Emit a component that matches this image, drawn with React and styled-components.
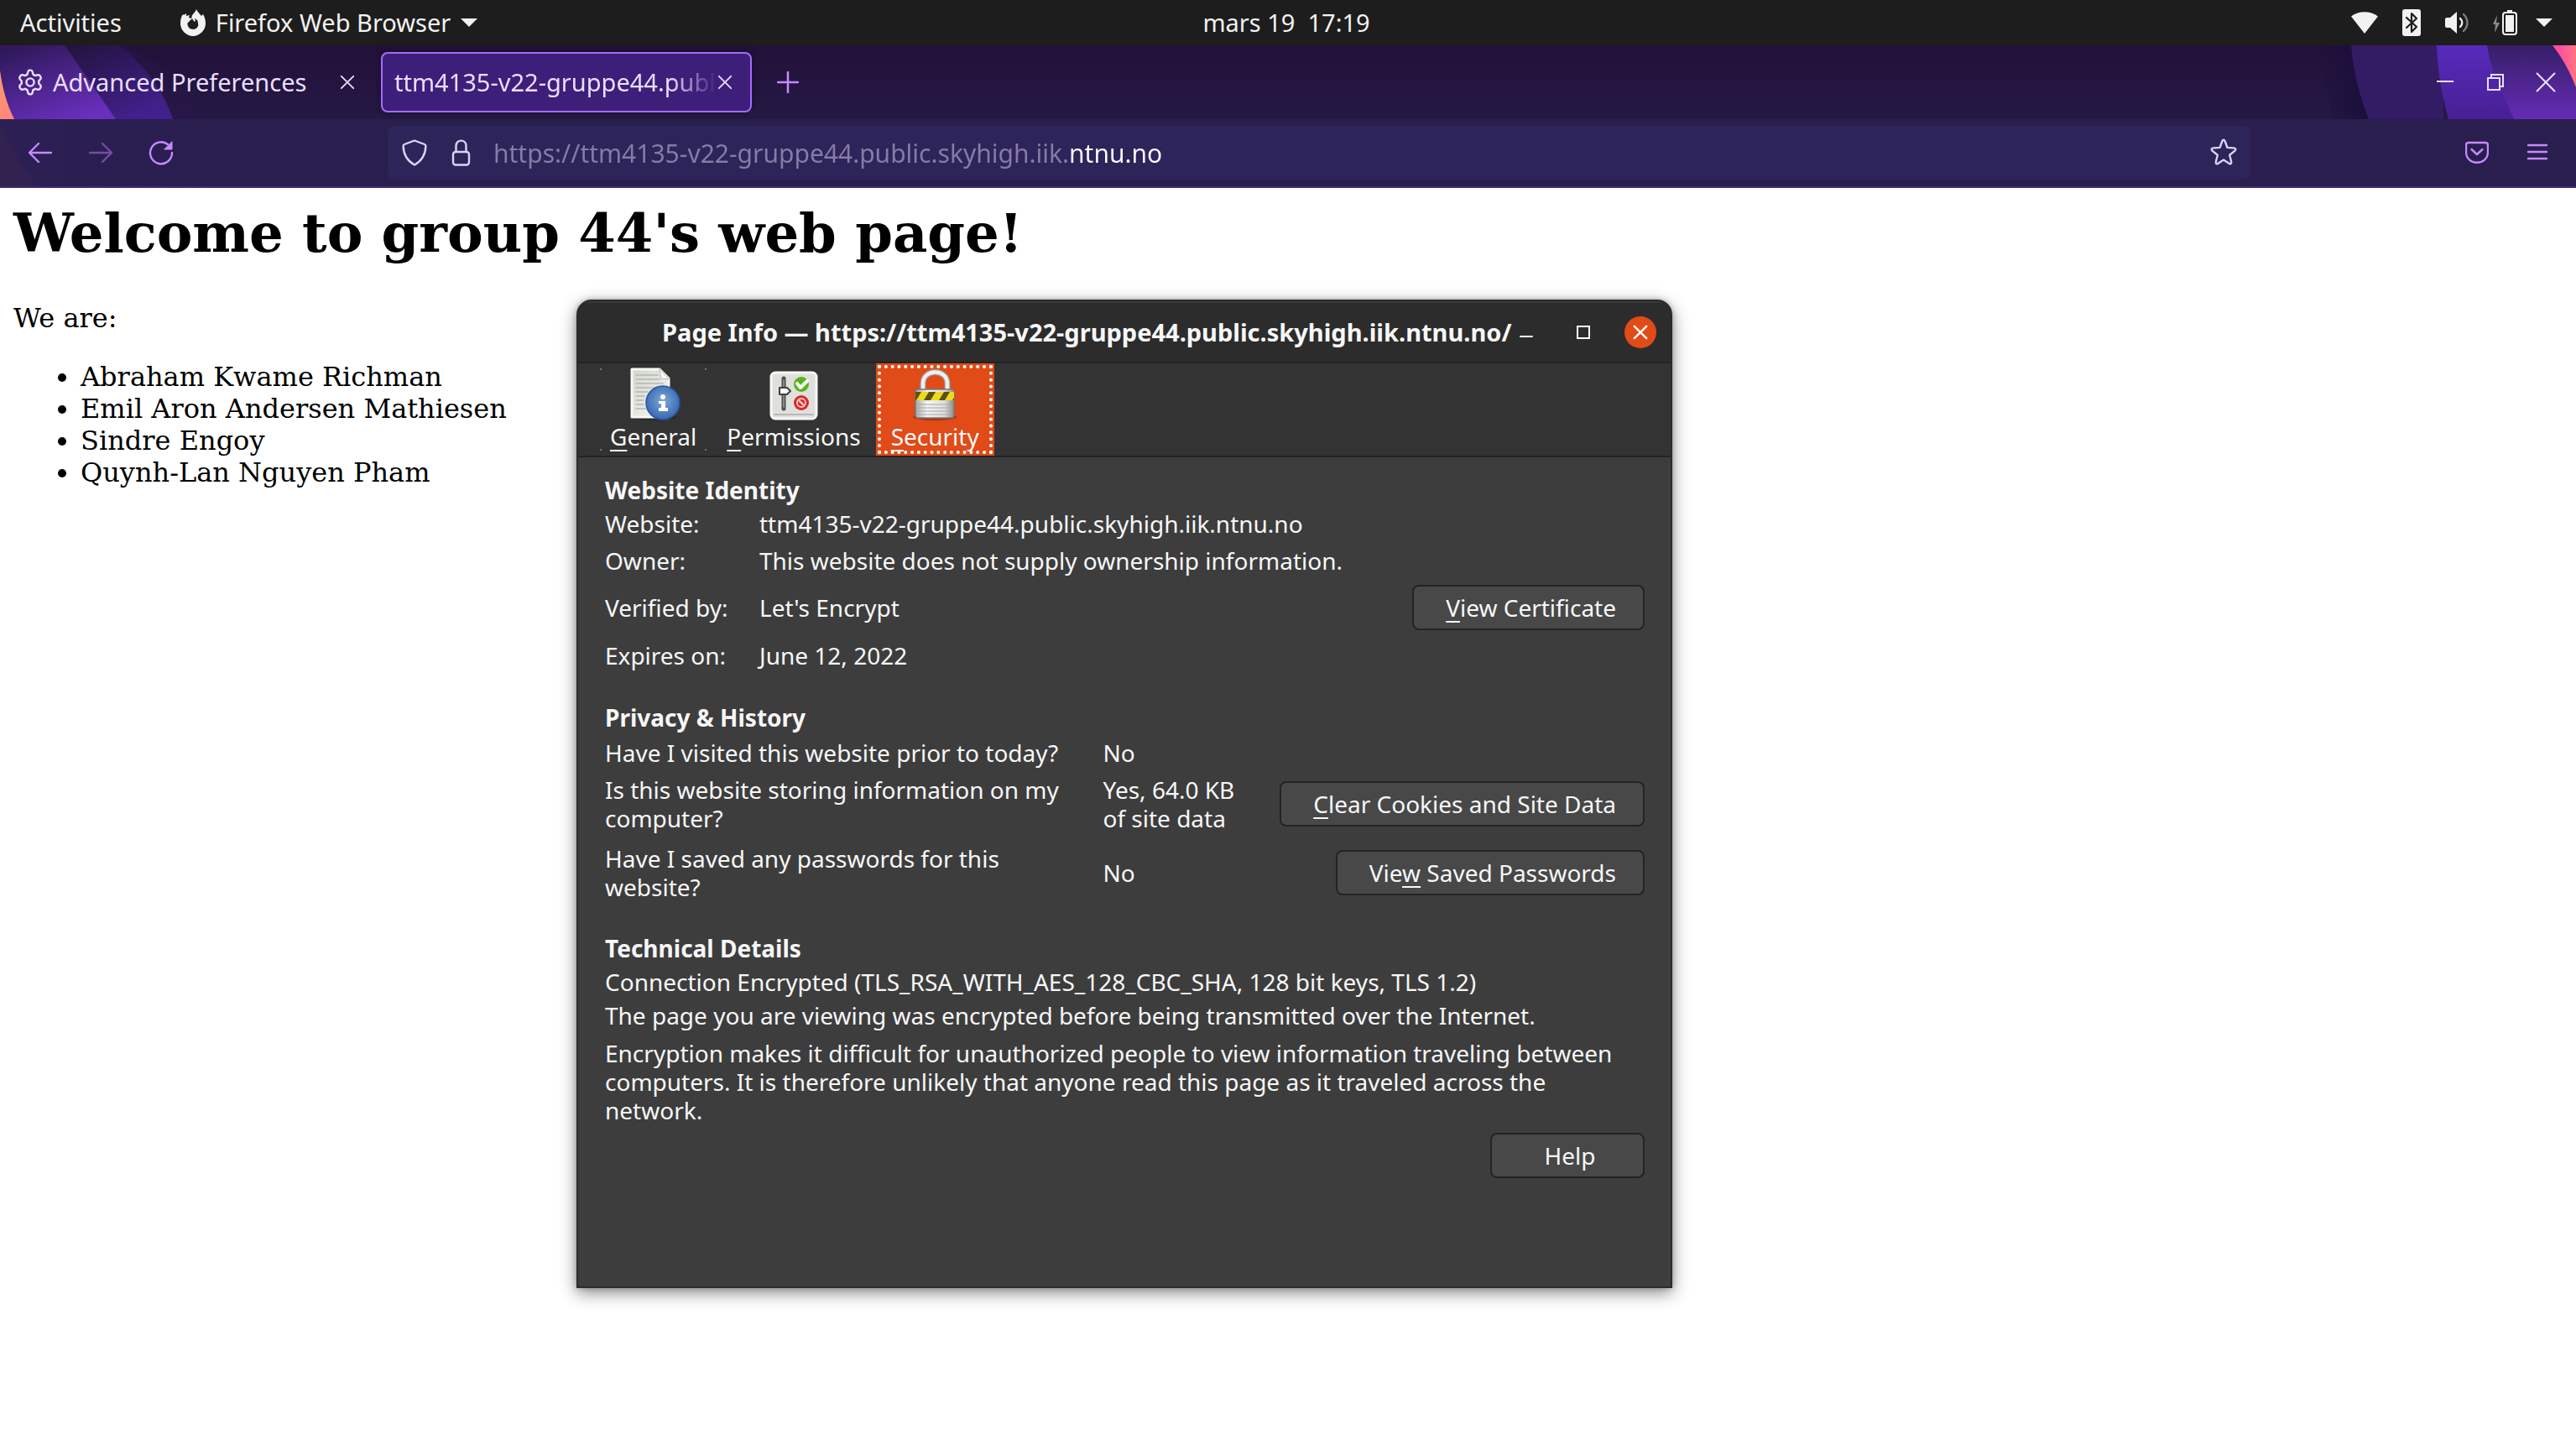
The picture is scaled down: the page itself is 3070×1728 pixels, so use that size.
import React from "react";
import styled, { createGlobalStyle } from "styled-components";

const ui = `"Noto Sans", "Open Sans", sans-serif`;
const serif = `"DejaVu Serif", serif`;

const GlobalStyle = createGlobalStyle`
  html, body, #root { height: 100%; }
  body { margin: 0; background: #fff; overflow: hidden; }
  button { font: inherit; color: inherit; background: none; border: 0; padding: 0; margin: 0; }
  *, *::before, *::after { box-sizing: border-box; }
`;

const Desktop = styled.div`
  position: relative;
  display: flex;
  flex-direction: column;
  min-height: 100%;
  font-family: ${ui};
  font-size: 28px;
`;

/* ---- GNOME panel ---- */

const Panel = styled.header`
  display: grid;
  grid-template-columns: 1fr auto 1fr;
  align-items: center;
  height: 54px;
  padding: 0 28px 0 24px;
  background: #1d1d1d;
  color: #f2f2f2;
  font-size: 29px;
`;

const PanelGroup = styled.div`
  display: flex;
  align-items: center;
  justify-content: ${(p) => (p.$end ? "flex-end" : "flex-start")};
  gap: ${(p) => p.$gap}px;
`;

const PanelButton = styled.button`
  display: flex;
  align-items: center;
  gap: ${(p) => p.$gap || 0}px;
  line-height: 54px;
  white-space: pre;
`;

const Icon = styled.svg`
  display: block;
  flex: none;
  width: ${(p) => p.$w}px;
  height: ${(p) => p.$h || p.$w}px;
  fill: none;
  stroke: currentColor;
  stroke-width: ${(p) => p.$stroke || 2};
  stroke-linecap: round;
  stroke-linejoin: ${(p) => (p.$sharp ? "miter" : "round")};
`;

const Solid = styled(Icon)`
  fill: currentColor;
  stroke: none;
`;

/* ---- Browser chrome ---- */

const TabStrip = styled.div`
  position: relative;
  display: flex;
  align-items: center;
  height: 88px;
  background: linear-gradient(#221139, #251945);
  color: #e9dffc;
  font-size: 29px;
`;

const Artwork = styled.svg`
  position: absolute;
  top: 0;
  ${(p) => (p.$right ? "right: 0;" : "left: 0;")}
  width: 320px;
  height: 88px;
`;

const Tab = styled.div`
  position: relative;
  display: flex;
  align-items: center;
  width: 442px;
  height: 72px;
  margin-left: ${(p) => (p.$active ? 4 : 8)}px;
  padding: 0 ${(p) => (p.$active ? 20 : 26)}px 0 ${(p) => (p.$active ? 14 : 12)}px;
  border: ${(p) => (p.$active ? "2px solid #a46cff" : "0")};
  border-radius: 8px;
  background: ${(p) => (p.$active ? "#3d1f7a" : "none")};
  box-shadow: ${(p) => (p.$active ? "0 0 8px rgba(0, 0, 0, 0.4)" : "none")};
`;

const TabTitle = styled.button`
  display: flex;
  flex: 1;
  align-items: center;
  gap: 11px;
  min-width: 0;
  overflow: hidden;
  line-height: 68px;
  text-align: left;
  white-space: nowrap;
  ${(p) => p.$fade && "mask-image: linear-gradient(to right, #000 calc(100% - 56px), transparent);"}
`;

const IconButton = styled.button`
  position: relative;
  display: flex;
  flex: none;
  align-items: center;
  justify-content: center;
  width: ${(p) => p.$size || 64}px;
  height: ${(p) => p.$size || 64}px;
  color: ${(p) => p.$color || "inherit"};
  opacity: ${(p) => (p.disabled ? 0.45 : 1)};
`;

const WindowControls = styled.div`
  display: flex;
  gap: 20px;
  margin-left: auto;
  padding-right: 16px;
`;

const NavBar = styled.nav`
  display: grid;
  grid-template-columns: 454px minmax(0, 1fr) 384px;
  align-items: center;
  height: 82px;
  padding: 0 4px;
  border-bottom: 2px solid #3a2f6e;
  background:
    linear-gradient(58deg, #33224f 0, #33224f 34px, transparent 38px),
    linear-gradient(90deg, #2b1f54, #291e4e 260px);
  color: #c58aff;
`;

const NavGroup = styled.div`
  display: flex;
  align-items: center;
  justify-content: ${(p) => (p.$end ? "flex-end" : "flex-start")};
  gap: ${(p) => p.$gap}px;
  padding: 0 10px 0 12px;
`;

const UrlBar = styled.label`
  display: flex;
  align-items: center;
  height: 64px;
  margin-left: 4px;
  padding: 0 14px 0 16px;
  gap: 26px;
  border-radius: 8px;
  background: #2d245a;
  color: #dcd3f2;
`;

const UrlInput = styled.input`
  flex: 1;
  min-width: 0;
  height: 60px;
  padding: 0;
  border: 0;
  outline: 0;
  font: 30px ${ui};
  color: transparent;
  background: linear-gradient(90deg, #877ca5 686px, #fbfbfe 686px);
  background-clip: text;
  -webkit-background-clip: text;
`;

/* ---- Web page ---- */

const Page = styled.main`
  flex: 1;
  padding: 16px;
  background: #fff;
  color: #000;
  font: 32px/38px ${serif};
`;

const PageTitle = styled.h1`
  margin: 0 0 44px;
  font-size: 64px;
  line-height: 76px;
`;

const Paragraph = styled.p`
  margin: 0 0 32px;
`;

const Members = styled.ul`
  margin: 0;
  padding-left: 80px;
`;

/* ---- Page Info window ---- */

const Dialog = styled.section`
  position: absolute;
  top: 357px;
  left: 687px;
  width: 1306px;
  min-height: 1178px;
  border: 2px solid #2b2b2b;
  border-radius: 18px 18px 0 0;
  overflow: hidden;
  background: #3d3d3d;
  color: #f7f7f7;
  box-shadow: 0 6px 20px rgba(0, 0, 0, 0.45), 0 0 6px rgba(0, 0, 0, 0.25);
`;

const TitleBar = styled.div`
  display: flex;
  align-items: center;
  height: 74px;
  padding: 0 17px 0 100px;
  border-top: 2px solid #393939;
  border-bottom: 2px solid #232323;
  background: #2c2c2c;
`;

const DialogTitle = styled.h2`
  flex: 1;
  margin: 0;
  min-width: 0;
  font-size: 29px;
  line-height: 70px;
  white-space: nowrap;
`;

const DialogControls = styled.div`
  display: flex;
  gap: 30px;
`;

const DialogControl = styled(IconButton)`
  width: 38px;
  height: 38px;
  border-radius: 50%;
  background: ${(p) => (p.$close ? "#e04b18" : "none")};
  color: #fff;
`;

const Categories = styled.div`
  display: flex;
  height: 112px;
  padding-left: 20px;
  border-bottom: 2px solid #232323;
  background: #333;
`;

const corner = "linear-gradient(#a8634c, #a8634c)";

const Category = styled.button`
  position: relative;
  display: flex;
  flex-direction: column;
  align-items: center;
  padding: 4px 18px;
  line-height: 38px;
  background: ${(p) => (p.$active ? "#e04b18" : "none")};

  &::before {
    content: ${(p) => (p.$marked ? '""' : "none")};
    position: absolute;
    inset: 6px;
    background: ${corner} 0 0, ${corner} 100% 0, ${corner} 0 100%, ${corner} 100% 100%;
    background-size: 2px 2px;
    background-repeat: no-repeat;
  }

  &::after {
    content: ${(p) => (p.$active ? '""' : "none")};
    position: absolute;
    inset: 2px;
    border: 4px dotted #fff;
  }
`;

const AccessKey = styled.u`
  text-decoration-thickness: 2px;
  text-underline-offset: 5px;
  text-decoration-skip-ink: none;
`;

const DialogBody = styled.div`
  padding: 19px 31px 0 32px;
`;

const Group = styled.section`
  margin-bottom: ${(p) => (p.$last ? 10 : 29)}px;
`;

const GroupTitle = styled.h3`
  margin: 0;
  font-size: 28px;
  line-height: 40px;
`;

const Facts = styled.table`
  width: 100%;
  table-layout: fixed;
  border-collapse: collapse;
  line-height: 34px;

  th, td { padding: 0; font-weight: 400; text-align: left; vertical-align: middle; }
  th { width: ${(p) => p.$label}px; padding-right: 28px; }
  td:last-child:not(:nth-child(2)) { text-align: right; }
`;

const Fact = styled.tr`
  height: ${(p) => p.$h}px;
`;

const Answer = styled.td`
  width: 188px;
`;

const Action = styled.td`
  width: ${(p) => p.$w || 320}px;
`;

const Push = styled.button`
  height: 54px;
  padding: 0 32px 0 38px;
  border: 2px solid #232323;
  border-radius: 8px;
  background: #484848;
  line-height: 50px;
  white-space: nowrap;
  min-width: 184px;
`;

const Detail = styled.p`
  margin: 0 0 ${(p) => p.$gap || 0}px;
  line-height: ${(p) => (p.$wrap ? 34 : 40)}px;
`;

const Footer = styled.div`
  display: flex;
  justify-content: flex-end;
`;

/* ---- Drawings ---- */

const Cross = ({ size, stroke }) => (
  <Icon $w={size} viewBox="0 0 20 20" $stroke={stroke || 2}>
    <path d="M2 2l16 16M18 2L2 18" />
  </Icon>
);

const Caret = () => (
  <Solid $w={20} $h={10} viewBox="0 0 20 10">
    <path d="M0 0h20L10 10z" />
  </Solid>
);

const FirefoxMark = () => (
  <Solid $w={30} $h={32} viewBox="0 0 30 32">
    <path
      fillRule="evenodd"
      d="M19 0c1 3 4 5 6 8l2-2c2 3 3 7 3 11 0 8-7 15-15 15S0 25 0 17C0 12 1 9 3 6l1 1 3-2v3l4-1-1 3 3 1c1-2 0-3 2-5 1-2 3-3 4-6zM14 11l-4 4c-2 1-2 3-1 5 1 3 4 4 7 4 4-1 6-4 5-7 0-3-1-5-4-6 1 2 1 3 0 4-1-1-2-2-3-4z"
    />
  </Solid>
);

const Gear = () => (
  <Icon $w={32} viewBox="0 0 32 32" $stroke={2.4}>
    <circle cx="16" cy="16" r="4.6" />
    <path d="M13.2 4q.4-2.400 2.800-2.400T18.800 4l.6 2.600 2.600 1.500 2.700-.8q2-.6 3.300 1.600 1.400 2.300 0 3.800L26.200 14.500v3l1.800 1.800q1.400 1.500 0 3.800-1.300 2.200-3.300 1.600l-2.700-.8-2.600 1.500-.6 2.600q-.4 2.400-2.800 2.400T13.200 28l-.6-2.600L10 23.900l-2.700.8q-2 .6-3.300-1.600-1.400-2.300 0-3.800L5.800 17.500v-3L4 12.700q-1.400-1.500 0-3.800 1.300-2.200 3.300-1.600l2.700.8 2.600-1.500z" />
  </Icon>
);

const LeftArt = () => (
  <Artwork viewBox="0 0 320 88" aria-hidden="true">
    <defs>
      <linearGradient id="l1" x1="0.2" y1="0" x2="0.7" y2="1">
        <stop offset="0" stopColor="#2f195c" />
        <stop offset="1" stopColor="#6a2fbe" />
      </linearGradient>
      <linearGradient id="l2" x1="0" y1="0" x2="0.6" y2="1">
        <stop offset="0" stopColor="#22133d" />
        <stop offset="1" stopColor="#42208c" />
      </linearGradient>
      <linearGradient id="l3" x1="0" y1="0" x2="0" y2="1">
        <stop offset="0" stopColor="#ff9a6e" />
        <stop offset="1" stopColor="#ff8878" />
      </linearGradient>
    </defs>
    <path d="M141 0C195 15 225 50 245 88H0V0z" fill="#281548" opacity="0.5" />
    <path d="M77 0h64c35 26 54 56 65 88h-70z" fill="url(#l2)" />
    <path d="M0 0h77l61 88H0z" fill="url(#l1)" />
    <path d="M0 30c3 22 8 40 17 58H0z" fill="url(#l3)" />
  </Artwork>
);

const RightArt = () => (
  <Artwork $right viewBox="0 0 320 88" aria-hidden="true">
    <defs>
      <linearGradient id="r0">
        <stop offset="0" stopColor="#1a0e3a" stopOpacity="0" />
        <stop offset="1" stopColor="#1a0e3a" />
      </linearGradient>
      <linearGradient id="r2" x1="0" y1="0" x2="0" y2="1">
        <stop offset="0" stopColor="#582abc" />
        <stop offset="1" stopColor="#462094" />
      </linearGradient>
      <linearGradient id="r3" x1="0" y1="0" x2="0" y2="1">
        <stop offset="0" stopColor="#371e68" />
        <stop offset="1" stopColor="#652cb5" />
      </linearGradient>
      <linearGradient id="r4">
        <stop offset="0.3" stopColor="#ff4fa0" />
        <stop offset="1" stopColor="#ff7480" />
      </linearGradient>
    </defs>
    <path d="M10 0h43l20 88H30z" fill="url(#r0)" />
    <path d="M52 0h110v88H73C62 60 54 30 52 0z" fill="#331c63" />
    <path d="M154 0h70l30 88h-86c-8-28-13-58-14-88z" fill="url(#r2)" />
    <path d="M214 0h106v88h-74C234 60 218 30 214 0z" fill="url(#r3)" />
    <path d="M292 0h28v50C313 32 304 15 292 0z" fill="url(#r4)" />
  </Artwork>
);

const GeneralIcon = () => (
  <Solid $w={64} viewBox="0 0 64 64">
    <defs>
      <linearGradient id="paper" x1="0" y1="0" x2="1" y2="1">
        <stop offset="0" stopColor="#d3d6cf" />
        <stop offset="1" stopColor="#f6f6f4" />
      </linearGradient>
      <radialGradient id="info" cx="0.5" cy="0.45" r="0.6">
        <stop offset="0" stopColor="#7fa9dc" />
        <stop offset="1" stopColor="#2f63ac" />
      </radialGradient>
    </defs>
    <ellipse cx="32" cy="60" rx="28" ry="4" fill="#222" opacity="0.5" />
    <path d="M6 3h33l11 11v46H6z" fill="url(#paper)" stroke="#f7f7f5" strokeWidth="3" />
    <path d="M39 3l2 11 9 1z" fill="#fff" stroke="#b5b8b0" strokeWidth="1" />
    <path d="M11 10h26M11 15h28M11 20h32M11 25h32M11 30h14M11 35h10M11 40h9M11 45h9M11 50h11" stroke="#b4b8ae" strokeWidth="1.5" />
    <circle cx="43" cy="43" r="20" fill="url(#info)" stroke="#28569c" strokeWidth="1.5" />
    <circle cx="43" cy="36" r="3" fill="#fff" />
    <path d="M38 41h8v8h3v4H38v-4h3v-5h-3z" fill="#fff" />
  </Solid>
);

const PermissionsIcon = () => (
  <Solid $w={64} viewBox="0 0 64 64">
    <rect x="5" y="7" width="54" height="55" rx="5" fill="#dfe0dc" stroke="#f6f6f6" strokeWidth="3" />
    <path d="M9 57h46" stroke="#b7b9b4" strokeWidth="2" />
    <path d="M20 14v36" stroke="#4b504d" strokeWidth="5" />
    <path d="M20 16v32" stroke="#9a9d9a" strokeWidth="1.5" />
    <path d="M15 25h9l4 4-4 4h-9z" fill="#fff" stroke="#3d4240" strokeWidth="2" />
    <circle cx="41" cy="21" r="9" fill="#57b51c" />
    <path d="M36 20l4 5 8-8" fill="none" stroke="#fff" strokeWidth="4" />
    <circle cx="41" cy="43" r="9" fill="#e02424" />
    <circle cx="41" cy="43" r="5" fill="none" stroke="#f3cccc" strokeWidth="2" />
    <path d="M38 40l6 6" stroke="#f3cccc" strokeWidth="2.4" />
  </Solid>
);

const PadlockIcon = () => (
  <Solid $w={64} viewBox="0 0 64 64">
    <defs>
      <linearGradient id="steel">
        <stop offset="0" stopColor="#a5a5a5" />
        <stop offset="0.3" stopColor="#f4f4f4" />
        <stop offset="0.75" stopColor="#dedede" />
        <stop offset="1" stopColor="#8a8a8a" />
      </linearGradient>
      <clipPath id="band">
        <rect x="9" y="30" width="46" height="10" />
      </clipPath>
    </defs>
    <ellipse cx="32" cy="60" rx="26" ry="4" fill="#7d2a0c" opacity="0.6" />
    <path d="M18 28V20C18 2 47 2 47 20v8" fill="none" stroke="#a09c9a" strokeWidth="7" />
    <path d="M18 28V20C18 2 47 2 47 20v8" fill="none" stroke="#eee" strokeWidth="4.5" />
    <rect x="9" y="27" width="46" height="34" rx="3" fill="url(#steel)" stroke="#777" strokeWidth="1.5" />
    <path d="M12 45h40M12 49h40M12 53h40M12 57h40" stroke="#a8a8a8" strokeWidth="1" />
    <g clipPath="url(#band)">
      <rect x="9" y="30" width="46" height="10" fill="#5c5210" />
      <path d="M16 30h9l-6 10h-9zM33 30h10l-6 10H27zM50 30h9l-6 10h-9z" fill="#f0d81c" />
    </g>
  </Solid>
);

const facts = [
  { label: "Website:", value: "ttm4135-v22-gruppe44.public.skyhigh.iik.ntnu.no", h: 40 },
  { label: "Owner:", value: "This website does not supply ownership information.", h: 48 },
  { label: "Verified by:", value: "Let's Encrypt", h: 64, action: true },
  { label: "Expires on:", value: "June 12, 2022", h: 50 },
];

const members = [
  "Abraham Kwame Richman",
  "Emil Aron Andersen Mathiesen",
  "Sindre Engoy",
  "Quynh-Lan Nguyen Pham",
];

export default function App() {
  return (
    <Desktop>
      <GlobalStyle />
      <Panel>
        <PanelGroup $gap={70}>
          <PanelButton>Activities</PanelButton>
          <PanelButton $gap={12}>
            <FirefoxMark />
            Firefox Web Browser
            <Caret />
          </PanelButton>
        </PanelGroup>
        <PanelButton>{"mars 19  17:19"}</PanelButton>
        <PanelGroup $end $gap={28}>
          <Solid $w={32} $h={26} viewBox="0 0 32 26" aria-label="Wi-Fi">
            <path d="M16 26L0 5.500C9-1.500 23-1.500 32 5.500z" />
          </Solid>
          <Solid $w={24} $h={32} viewBox="0 0 24 32" aria-label="Bluetooth">
            <rect x="1" width="22" height="32" rx="3" />
            <path d="M6 10l12 11-6 6V5l6 6L6 22" fill="none" stroke="#1d1d1d" strokeWidth="2.200" />
          </Solid>
          <Solid $w={28} $h={26} viewBox="0 0 28 26" aria-label="Volume">
            <path d="M0 9q0-2 2-2h4l8-7v26l-8-7H2q-2 0-2-2z" />
            <path d="M18 8c3 3 3 7 0 10" fill="none" stroke="currentColor" strokeWidth="2.400" />
            <path d="M22 3c6 6 6 14 0 20" fill="none" stroke="#7f7f7f" strokeWidth="2.400" />
          </Solid>
          <PanelGroup $gap={22}>
            <Solid $w={30} $h={30} viewBox="0 0 30 30" aria-label="Battery">
              <path d="M6 6L1 17h3l-1 10 6-12H5z" fill="#8a8a8a" />
              <rect x="13" y="3" width="16" height="26" rx="3" fill="none" stroke="currentColor" strokeWidth="2" />
              <path d="M18 0h6v3h-6zM16 6h10v20H16z" />
            </Solid>
            <Caret />
          </PanelGroup>
        </PanelGroup>
      </Panel>

      <TabStrip>
        <LeftArt />
        <RightArt />
        <Tab>
          <TabTitle>
            <Gear />
            Advanced Preferences
          </TabTitle>
          <IconButton $size={20} aria-label="Close tab">
            <Cross size={18} />
          </IconButton>
        </Tab>
        <Tab $active>
          <TabTitle $fade>ttm4135-v22-gruppe44.public.skyhigh.iik.ntnu.no</TabTitle>
          <IconButton $size={20} aria-label="Close tab">
            <Cross size={18} />
          </IconButton>
        </Tab>
        <IconButton $size={86} $color="#c58aff" aria-label="New tab">
          <Icon $w={26} viewBox="0 0 26 26" $stroke={2.5}>
            <path d="M13 1v24M1 13h24" />
          </Icon>
        </IconButton>
        <WindowControls>
          <IconButton $size={40} aria-label="Minimize">
            <Icon $w={20} viewBox="0 0 20 20">
              <path d="M0 9h20" />
            </Icon>
          </IconButton>
          <IconButton $size={40} aria-label="Restore">
            <Icon $w={20} viewBox="0 0 20 20" $sharp>
              <path d="M1 5h14v14H1zM5 5V1h14v14h-4" />
            </Icon>
          </IconButton>
          <IconButton $size={40} aria-label="Close">
            <Cross size={26} stroke={1.6} />
          </IconButton>
        </WindowControls>
      </TabStrip>

      <NavBar>
        <NavGroup $gap={8}>
          <IconButton aria-label="Back">
            <Icon $w={28} viewBox="0 0 28 28" $stroke={2.4}>
              <path d="M27 14H1M12 3L1 14l11 11" />
            </Icon>
          </IconButton>
          <IconButton disabled aria-label="Forward">
            <Icon $w={28} viewBox="0 0 28 28" $stroke={2.4}>
              <path d="M1 14h26M16 3l11 11-11 11" />
            </Icon>
          </IconButton>
          <IconButton aria-label="Reload">
            <Icon $w={30} viewBox="0 0 30 30" $stroke={2.4}>
              <path d="M28 15a13 13 0 1 1-5-10" />
              <path d="M28 2v9h-9z" fill="currentColor" strokeWidth="1" />
            </Icon>
          </IconButton>
        </NavGroup>
        <UrlBar>
          <Icon $w={32} viewBox="0 0 32 32" $stroke={2.4}>
            <path d="M16 1.500L28 6q1.500.6 1.400 2.400C29 18 25 25.500 16 30.500 7 25.500 3 18 2.600 8.400 2.500 6.600 4 6 4 6z" />
          </Icon>
          <Icon $w={26} $h={32} viewBox="0 0 26 32" $stroke={2.4}>
            <rect x="4" y="15" width="19" height="15.500" rx="3" />
            <path d="M7.500 15V8c0-8.500 12-8.500 12 0v7" />
          </Icon>
          <UrlInput aria-label="Address" defaultValue="https://ttm4135-v22-gruppe44.public.skyhigh.iik.ntnu.no" />
          <Icon $w={36} viewBox="0 0 36 36" $stroke={2.4}>
            <path d="M16.200 4.500q1.800-3.600 3.600 0l2.600 7.400 7.900.5q3.400.6 1.200 3.200l-6.300 5.200 2 8.200q.3 3.200-2.700 1.800L18 26.500l-6.500 4.300q-3 1.400-2.700-1.800l2-8.200-6.300-5.200q-2.200-2.600 1.200-3.200l7.900-.5z" />
          </Icon>
        </UrlBar>
        <NavGroup $end $gap={8}>
          <IconButton aria-label="Save to Pocket">
            <Icon $w={28} viewBox="0 0 28 28" $stroke={2.4}>
              <path d="M4 2h20q3 0 3 3v8c0 17-26 17-26 0V5q0-3 3-3z" />
              <path d="M7.500 10l6.500 6 6.500-6" />
            </Icon>
          </IconButton>
          <IconButton aria-label="Open menu">
            <Icon $w={26} viewBox="0 0 26 26" $stroke={2.4}>
              <path d="M2 4h22M2 12h22M2 20h22" />
            </Icon>
          </IconButton>
        </NavGroup>
      </NavBar>

      <Page>
        <PageTitle>Welcome to group 44's web page!</PageTitle>
        <Paragraph>We are:</Paragraph>
        <Members>
          {members.map((name) => (
            <li key={name}>{name}</li>
          ))}
        </Members>
      </Page>

      <Dialog role="dialog" aria-labelledby="info-title">
        <TitleBar>
          <DialogTitle id="info-title">
            Page Info — https://ttm4135-v22-gruppe44.public.skyhigh.iik.ntnu.no/
          </DialogTitle>
          <DialogControls>
            <DialogControl aria-label="Minimize">
              <Icon $w={16} viewBox="0 0 16 16">
                <path d="M1 13h14" />
              </Icon>
            </DialogControl>
            <DialogControl aria-label="Maximize">
              <Icon $w={16} viewBox="0 0 16 16" $sharp>
                <path d="M1 1h14v14H1z" />
              </Icon>
            </DialogControl>
            <DialogControl $close aria-label="Close">
              <Cross size={18} stroke={2.6} />
            </DialogControl>
          </DialogControls>
        </TitleBar>
        <Categories>
          <Category $marked>
            <GeneralIcon />
            <span><AccessKey>G</AccessKey>eneral</span>
          </Category>
          <Category>
            <PermissionsIcon />
            <span><AccessKey>P</AccessKey>ermissions</span>
          </Category>
          <Category $active>
            <PadlockIcon />
            <span><AccessKey>S</AccessKey>ecurity</span>
          </Category>
        </Categories>
        <DialogBody>
          <Group>
            <GroupTitle>Website Identity</GroupTitle>
            <Facts $label={184}>
              <tbody>
                {facts.map((f) => (
                  <Fact key={f.label} $h={f.h}>
                    <th scope="row">{f.label}</th>
                    <td colSpan={f.action ? 1 : 2}>{f.value}</td>
                    {f.action && (
                      <Action>
                        <Push><AccessKey>V</AccessKey>iew Certificate</Push>
                      </Action>
                    )}
                  </Fact>
                ))}
              </tbody>
            </Facts>
          </Group>
          <Group>
            <GroupTitle>Privacy &amp; History</GroupTitle>
            <Facts $label={593}>
              <tbody>
                <Fact $h={43}>
                  <th scope="row">Have I visited this website prior to today?</th>
                  <Answer>No</Answer>
                  <Action $w={457} />
                </Fact>
                <Fact $h={80}>
                  <th scope="row">Is this website storing information on my computer?</th>
                  <Answer>Yes, 64.0 KB of site data</Answer>
                  <Action $w={457}>
                    <Push><AccessKey>C</AccessKey>lear Cookies and Site Data</Push>
                  </Action>
                </Fact>
                <Fact $h={83}>
                  <th scope="row">Have I saved any passwords for this website?</th>
                  <Answer>No</Answer>
                  <Action $w={457}>
                    <Push>Vie<AccessKey>w</AccessKey> Saved Passwords</Push>
                  </Action>
                </Fact>
              </tbody>
            </Facts>
          </Group>
          <Group $last>
            <GroupTitle>Technical Details</GroupTitle>
            <Detail>Connection Encrypted (TLS_RSA_WITH_AES_128_CBC_SHA, 128 bit keys, TLS 1.2)</Detail>
            <Detail $gap={8}>The page you are viewing was encrypted before being transmitted over the Internet.</Detail>
            <Detail $wrap>
              Encryption makes it difficult for unauthorized people to view information traveling between
              computers. It is therefore unlikely that anyone read this page as it traveled across the network.
            </Detail>
          </Group>
          <Footer>
            <Push>Help</Push>
          </Footer>
        </DialogBody>
      </Dialog>
    </Desktop>
  );
}
